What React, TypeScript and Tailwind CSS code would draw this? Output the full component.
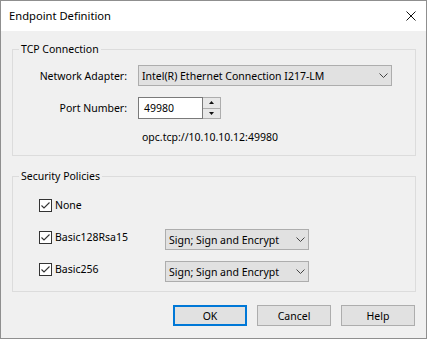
import React from "react";

function Chevron() {
  return (
    <svg width="9" height="5" viewBox="0 0 9 5" className="shrink-0">
      <polyline points="0.5,0.5 4.5,4.5 8.5,0.5" fill="none" stroke="#444" strokeWidth="1" />
    </svg>
  );
}

function Combo({ text, className }: { text: string; className: string }) {
  return (
    <div
      className={`flex items-center justify-between border border-[#adadad] bg-[#e1e1e1] pl-[3px] pr-[3px] ${className}`}
    >
      <span className="whitespace-nowrap">{text}</span>
      <Chevron />
    </div>
  );
}

function Check({ label }: { label: string }) {
  return (
    <div className="flex h-[16px] w-[126px] shrink-0 items-center">
      <div className="flex h-[13px] w-[13px] items-center justify-center border border-[#333333] bg-white">
        <svg width="11" height="11" viewBox="0 0 11 11">
          <polyline points="1.5,5.5 4,8 9.5,2.5" fill="none" stroke="#333" strokeWidth="1.1" />
        </svg>
      </div>
      <span className="ml-[3px] whitespace-nowrap">{label}</span>
    </div>
  );
}

function Button({ label, primary }: { label: string; primary?: boolean }) {
  return (
    <div
      className={`flex h-[21px] w-[74px] items-center justify-center bg-[#e1e1e1] ${
        primary ? "border-2 border-[#0078d7]" : "border border-[#adadad]"
      }`}
    >
      {label}
    </div>
  );
}

export default function App() {
  return (
    <div className="flex h-[339px] w-[427px] flex-col border border-[#8f8f8f] bg-[#f0f0f0] font-['Noto_Sans',sans-serif] text-[10.5px] leading-[16px] text-black">
      <div className="flex h-[30px] shrink-0 items-center justify-between bg-white pl-[8px] pr-[10px]">
        <span className="text-[11.2px] text-black">Endpoint Definition</span>
        <svg width="10" height="10" viewBox="0 0 10 10">
          <line x1="0.5" y1="0.5" x2="9.5" y2="9.5" stroke="#111" strokeWidth="1" />
          <line x1="9.5" y1="0.5" x2="0.5" y2="9.5" stroke="#111" strokeWidth="1" />
        </svg>
      </div>
      <div className="flex flex-1 flex-col pl-[11px] pr-[10px]">
        <fieldset className="mt-[10px] border border-[#dcdcdc] p-0">
          <legend className="ml-[6px] px-[2px] leading-[16px]">TCP Connection</legend>
          <div className="flex flex-col pb-[10px] pt-[8px]">
            <div className="flex items-center">
              <span className="w-[114px] text-right">Network Adapter:</span>
              <Combo text="Intel(R) Ethernet Connection I217-LM" className="ml-[11px] h-[21px] w-[254px]" />
            </div>
            <div className="mt-[11px] flex items-center">
              <span className="w-[114px] text-right">Port Number:</span>
              <div className="ml-[11px] flex h-[22px]">
                <div className="flex h-[22px] w-[65px] items-center border border-[#7a7a7a] bg-white pl-[5px]">
                  49980
                </div>
                <div className="flex h-[22px] w-[18px] flex-col border border-l-0 border-[#adadad] bg-[#e8e8e8]">
                  <div className="flex flex-1 items-center justify-center border-b border-[#adadad]">
                    <svg width="5" height="3" viewBox="0 0 5 3">
                      <polygon points="0,3 5,3 2.5,0" fill="#111" />
                    </svg>
                  </div>
                  <div className="flex flex-1 items-center justify-center">
                    <svg width="5" height="3" viewBox="0 0 5 3">
                      <polygon points="0,0 5,0 2.5,3" fill="#111" />
                    </svg>
                  </div>
                </div>
              </div>
            </div>
            <div className="mt-[10px] pl-[129px]">opc.tcp://10.10.10.12:49980</div>
          </div>
        </fieldset>
        <fieldset className="mt-[12px] border border-[#dcdcdc] p-0">
          <legend className="ml-[6px] px-[2px] leading-[16px]">Security Policies</legend>
          <div className="flex flex-col pb-[9px] pl-[26px] pt-[13px]">
            <Check label="None" />
            <div className="mt-[16px] flex items-start">
              <Check label="Basic128Rsa15" />
              <Combo text="Sign; Sign and Encrypt" className="h-[21px] w-[144px]" />
            </div>
            <div className="mt-[11px] flex items-start">
              <Check label="Basic256" />
              <Combo text="Sign; Sign and Encrypt" className="h-[21px] w-[144px]" />
            </div>
          </div>
        </fieldset>
        <div className="mt-[13px] flex justify-end gap-[10px] pr-[1px]">
          <Button label="OK" primary />
          <Button label="Cancel" />
          <Button label="Help" />
        </div>
      </div>
    </div>
  );
}
